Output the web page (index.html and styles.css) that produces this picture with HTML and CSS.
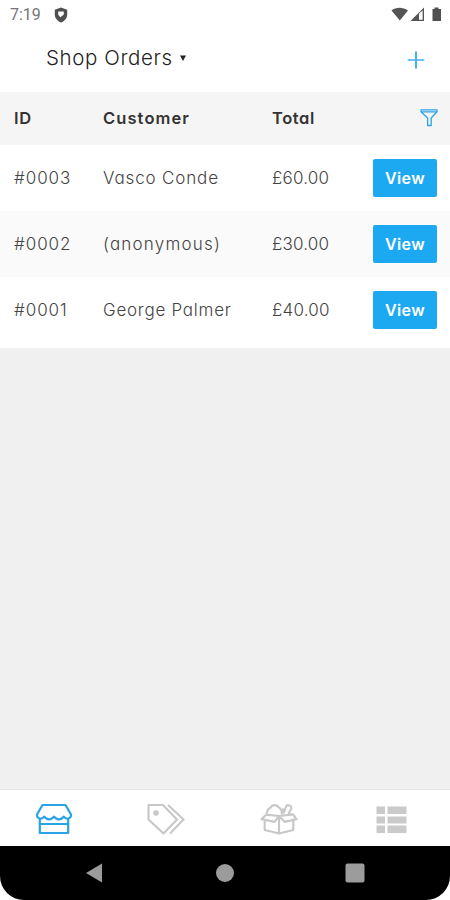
FILE: index.html
```
<!DOCTYPE html>
<html lang="en">
<head>
    <meta charset="UTF-8">
    <meta name="viewport" content="width=device-width, initial-scale=1.0">
    <title>Shop Orders</title>
    <link rel="stylesheet" href="styles.css">
</head>
<body>
    <div class="phone">
        <div class="status">
            <span class="time">7:19</span>
            <svg class="shield" width="14" height="16" viewBox="0 0 14 16">
                <path d="M7 0.5L13.2 2.8V7.5C13.2 11.3 10.6 14 7 15.5C3.4 14 .8 11.3 .8 7.5V2.8Z" fill="#505050"/>
                <path d="M4.2 4.5H9.8V7.4L6.4 10.2L4.2 7.8Z" fill="#fff"/>
            </svg>
            <svg class="signals" width="52" height="16" viewBox="0 0 52 16">
                <path d="M1.5 3.5C6-.2 13-.2 18 3.5L9.8 13.5Z" fill="#555"/>
                <path d="M20.5 14L34 .5V14Z" fill="#555"/>
                <path d="M29 6.5L32.6 3.5V12.8H29Z" fill="#fff"/>
                <path d="M42.5 2H44.5V.5H48.5V2H51V14H42.5Z" fill="#505050"/>
            </svg>
        </div>
        <div class="title">
            <h1>Shop Orders</h1>
            <svg class="caret" width="6" height="6" viewBox="0 0 6 6"><path d="M0 .4H6L3 6Z" fill="#222"/></svg>
            <svg class="plus" width="18" height="18" viewBox="0 0 18 18">
                <path d="M9 .5V17.5" stroke="#1a9ce8" stroke-width="1.6"/>
                <path d="M.7 9H17.3" stroke="#4eb4f0" stroke-width="1.6"/>
            </svg>
        </div>
        <div class="content">
            <div class="orders">
                <div class="row head">
                    <span>ID</span>
                    <span class="customer">Customer</span>
                    <span class="total">Total</span>
                    <svg class="filter" width="18" height="18" viewBox="0 0 18 18" fill="none" stroke="#2ba4ea" stroke-width="1.3" stroke-linejoin="round">
                        <path d="M1 .8H17V2.8L11.2 9V16.5H7.6V9L1 2.8ZM1.2 2.8H16.8"/>
                    </svg>
                </div>
                <div class="row">
                    <span class="id">#0003</span>
                    <span class="vasco">Vasco Conde</span>
                    <span class="price">£60.00</span>
                    <button class="view">View</button>
                </div>
                <div class="row">
                    <span class="id">#0002</span>
                    <span class="anon">(anonymous)</span>
                    <span class="price">£30.00</span>
                    <button class="view">View</button>
                </div>
                <div class="row">
                    <span class="id">#0001</span>
                    <span class="george">George Palmer</span>
                    <span class="price">£40.00</span>
                    <button class="view">View</button>
                </div>
            </div>
        </div>
        <div class="tabs">
            <!-- shop -->
            <svg class="on" width="38" height="32" viewBox="0 0 38 32">
                <path d="M7.5 2H30.5L36 11.5C36.5 15.5 31.5 17.3 28.8 13.7C26.3 17.2 21.5 17.2 19 13.7C16.5 17.2 11.7 17.2 9.2 13.7C6.5 17.3 1.5 15.5 2 11.5ZM4.8 15.5V30H33.2V15.5M4.8 21H33.2"/>
            </svg>
            <!-- tags -->
            <svg width="38" height="32" viewBox="0 0 38 32">
                <path d="M1.5 2H16L30 16.5L16.5 30.5L1.5 16.5ZM21 2L36.5 16.5L23 30.5"/>
                <circle cx="9" cy="10" r="2.8" fill="#c8c8c8" stroke="none"/>
            </svg>
            <!-- products -->
            <svg width="38" height="32" viewBox="0 0 38 32">
                <path d="M4.7 17V27L19 30.5L33.3 27V17M19 12.5V30M6 11.7L19 13L33 11.3L36.5 16.2L24.5 18.8L19 13L14.5 18.8L1.5 16.2L6 11.7"/>
                <path d="M6.5 11C7 7.5 8.5 5.5 10.5 4.7C12.5 1.2 17 1.2 18.8 4.5C21 5.5 22 8 22 11.5M23.5 10.5L26 3.5Q27 1.5 29.5 2.5Q32 3.5 31 6L28.5 11.3M22.5 5.5L24 9.5"/>
            </svg>
            <!-- list -->
            <svg width="38" height="32" viewBox="0 0 38 32">
                <path d="M4.5 3.5H13V11H4.5ZM15.5 3.5H34.5V11H15.5ZM4.5 13.5H13V20.5H4.5ZM15.5 13.5H34.5V20.5H15.5ZM4.5 22.5H13V30H4.5ZM15.5 22.5H34.5V30H15.5Z" fill="#cacaca" stroke="none"/>
            </svg>
        </div>
        <div class="android">
            <svg width="22" height="22" viewBox="0 0 22 22"><path d="M2 11L18 1.5V20.5Z"/></svg>
            <svg width="22" height="22" viewBox="0 0 22 22"><circle cx="11" cy="11" r="9"/></svg>
            <svg width="22" height="22" viewBox="0 0 22 22"><rect x="1.5" y="1.5" width="19" height="19" rx="2"/></svg>
        </div>
    </div>
</body>
</html>
```
FILE: styles.css
```
body {
    margin: 0;
    background: #fff;
    font-family: Inter, "Open Sans", sans-serif;
    font-feature-settings: "cv11";
    color: #333;
}
.phone {
    display: flex;
    flex-direction: column;
    height: 900px;
    overflow: hidden;
}
.status {
    display: flex;
    align-items: center;
    height: 30px;
    padding: 0 8px 0 10px;
}
.time {
    width: 44px;
    font: 16px/30px Roboto, sans-serif;
    color: #757575;
}
.signals {
    margin-left: auto;
}
.title {
    display: flex;
    align-items: center;
    height: 62px;
    padding: 0 25px 0 46px;
    box-sizing: border-box;
}
h1 {
    width: 134px;
    margin: 0 0 7px;
    font-size: 20.5px;
    font-weight: 350;
    letter-spacing: .6px;
    white-space: nowrap;
    color: #222;
}
.caret {
    margin-bottom: 7px;
}
.plus {
    margin-left: auto;
    margin-bottom: 2px;
}
.content {
    flex: 1;
    background: #f0f0f0;
}
.orders {
    height: 256px;
    background: #fff;
}
.row {
    display: grid;
    grid-template-columns: 89px 169px 1fr auto;
    align-items: center;
    height: 66px;
    padding: 0 13px 0 14px;
    box-sizing: border-box;
    font-size: 17px;
    font-weight: 300;
    white-space: nowrap;
    color: #444;
}
.row:nth-child(3) {
    background: #fafafa;
}
.id {
    letter-spacing: .95px;
}
.vasco {
    letter-spacing: .85px;
}
.anon {
    letter-spacing: 1.2px;
}
.george {
    letter-spacing: .75px;
}
.price {
    letter-spacing: .2px;
}
.head {
    padding-bottom: 1px;
    height: 53px;
    background: #f5f5f5;
    font-size: 16.5px;
    font-weight: 600;
    letter-spacing: .6px;
    color: #333;
}
.customer {
    letter-spacing: 1.1px;
}
.filter {
    margin-right: -1px;
}
.view {
    width: 64px;
    height: 38px;
    padding: 0;
    border: 0;
    border-radius: 2px;
    background: #1da9f2;
    font: 600 16px Inter, sans-serif;
    letter-spacing: .4px;
    color: #fff;
}
.tabs {
    display: flex;
    align-items: center;
    justify-content: space-between;
    height: 57px;
    padding: 2px 40px 0 35px;
    box-sizing: border-box;
    border-top: 1px solid #e4e4e4;
}
.tabs svg {
    fill: none;
    stroke: #c8c8c8;
    stroke-width: 2.2;
    stroke-linejoin: round;
}
.tabs .on {
    stroke: #27a3e6;
}
.android {
    display: flex;
    align-items: center;
    justify-content: space-between;
    height: 54px;
    padding: 0 84px;
    box-sizing: border-box;
    border-radius: 0 0 24px 24px;
    background: #000;
}
.android svg {
    fill: #9c9c9c;
}
```
